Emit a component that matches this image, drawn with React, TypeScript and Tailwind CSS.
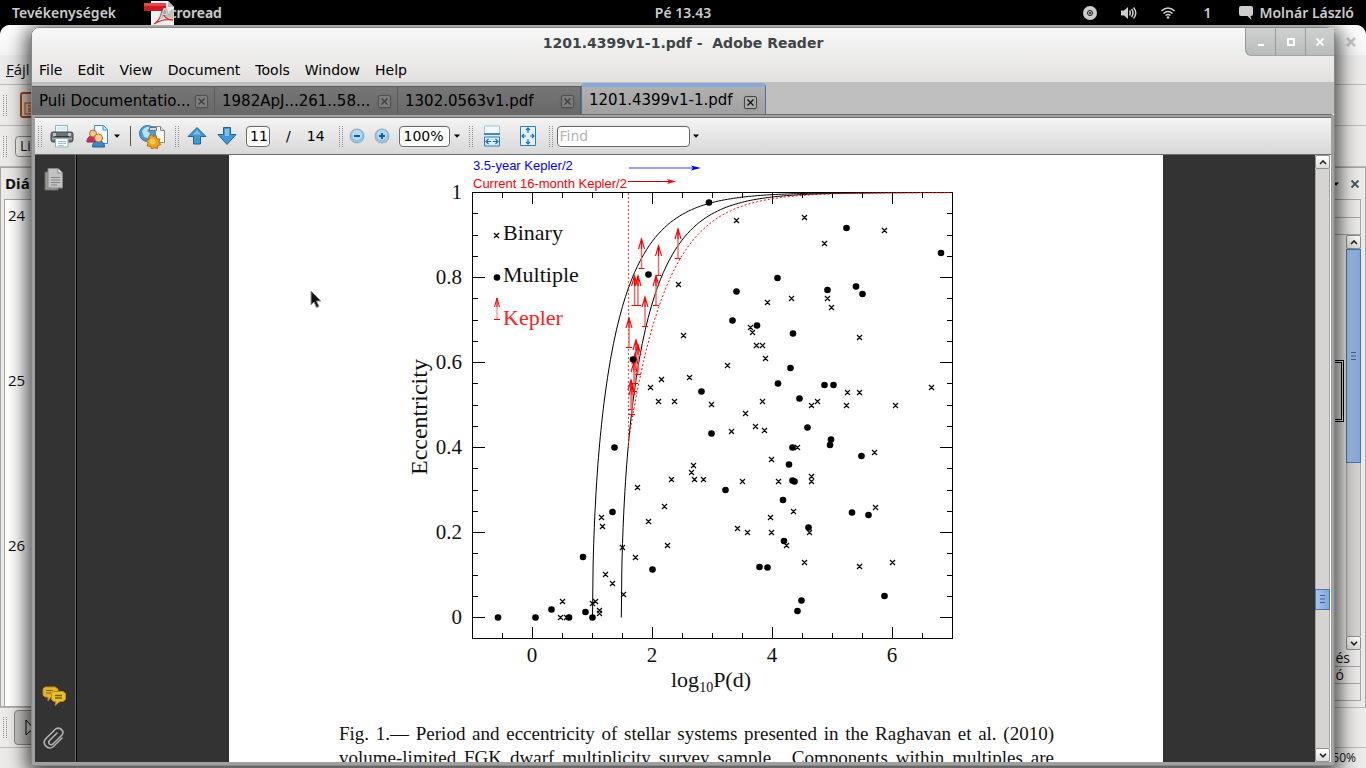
import type { ReactNode } from 'react';

type Point = [number, number];

const MENUS = ['File', 'Edit', 'View', 'Document', 'Tools', 'Window', 'Help'];

const TABS = [
  { label: 'Puli Documentatio...', active: false },
  { label: '1982ApJ...261..58...', active: false },
  { label: '1302.0563v1.pdf', active: false },
  { label: '1201.4399v1-1.pdf', active: true },
];

const SLIDES = ['24', '25', '26'];

// Data points of the plot, in page coordinates
const BINARIES: Point[] = [
  [678, 284], [683, 335], [661, 379], [689, 377], [650, 387], [658, 401], [674, 401], [711, 404],
  [693, 465], [691, 472], [694, 479], [703, 479], [671, 479], [637, 487], [664, 506], [601, 517],
  [602, 526], [648, 521], [667, 545], [622, 547], [635, 557], [605, 574], [612, 583], [623, 594],
  [562, 601], [595, 601], [592, 603], [599, 610], [599, 613], [560, 617], [566, 617], [736, 220],
  [804, 217], [884, 230], [824, 243], [791, 298], [767, 302], [827, 298], [831, 307], [859, 337],
  [750, 327], [752, 332], [756, 345], [762, 345], [765, 358], [727, 365], [762, 401], [745, 413],
  [811, 405], [817, 401], [847, 392], [859, 392], [846, 405], [895, 405], [931, 387], [731, 431],
  [755, 426], [764, 430], [771, 459], [797, 447], [874, 452], [742, 481], [778, 481], [811, 476],
  [811, 481], [793, 511], [875, 507], [770, 517], [737, 528], [747, 532], [771, 532], [809, 532],
  [786, 545], [804, 562], [859, 566], [892, 562],
];

const MULTIPLES: Point[] = [
  [709, 202.5], [648.5, 274.5], [633, 359.5], [701.5, 391.5], [711.5, 433.5], [614.5, 447.5],
  [612.5, 512], [583, 557], [652.5, 569.5], [551.5, 609.5], [585.5, 612], [498, 617.5],
  [535.5, 617.5], [569, 617.5], [592.5, 617.5], [846.5, 228], [941, 253], [777.5, 278],
  [736.5, 291.5], [827.5, 290], [856, 286.5], [862.5, 294], [732.5, 320.5], [757, 325.5],
  [793, 333.5], [790.5, 368], [778, 383.5], [824.5, 385], [833.5, 385], [799.5, 398.5],
  [807.5, 427.5], [831, 439.5], [830, 445], [792.5, 447.5], [861.5, 456], [789, 464.5],
  [792.5, 480.5], [794.5, 481.5], [725.5, 490], [783, 500], [852, 512.5], [868.5, 515],
  [808.5, 527.5], [784, 541], [759.5, 567], [767.5, 567.5], [884.5, 596], [801.5, 600.5],
  [797.5, 611],
];

// Tips of the Kepler arrows
const KEPLER: Point[] = [
  [641.5, 239], [658.5, 246], [678, 229], [634.5, 276], [638, 276], [656, 276], [645, 297],
  [629, 318], [636, 340], [638, 345], [634, 362], [635, 354], [631, 380], [632, 385],
];

const toX = (logP: number) => 532.5 + logP * 60;
const toY = (e: number) => 617.5 - e * 425;

function curve(from: number, ecc: (logP: number) => number) {
  let d = '';
  for (let p = from; p <= 7.001; p += p < from + 0.2 ? 0.01 : 0.05) {
    d += `${d ? 'L' : 'M'}${toX(p).toFixed(1)} ${toY(ecc(p)).toFixed(1)}`;
  }
  return d;
}

const circular = (p0: number) => (p: number) => Math.sqrt(Math.max(0, 1 - 10 ** ((-2 * (p - p0)) / 3)));

function KeplerArrow({ x, y }: { x: number; y: number }) {
  return (
    <>
      <path d={`M${x} ${y}v29.5`} stroke="#ff6060" strokeWidth="1.4" />
      <path d={`M${x - 3} ${y + 29.5}h6M${x - 3} ${y + 10}L${x} ${y}L${x + 3} ${y + 10}M${x} ${y}v10`} stroke="#ff0000" strokeWidth="1.1" />
    </>
  );
}

function Ticks() {
  const marks: string[] = [];
  for (let i = -1; i <= 14; i++) {
    const x = toX(i / 2);
    const len = i % 4 === 0 ? 12 : 6;
    if (i < 14) marks.push(`M${x} 192v${len}M${x} 639v-${len}`);
  }
  for (let i = 0; i < 20; i++) {
    const y = Math.round(toY(i / 20) - 0.5) + 0.5;
    const len = i % 4 === 0 ? 13 : 6;
    marks.push(`M472 ${y}h${len}M953 ${y}h-${len}`);
  }
  return <path d={marks.join('')} stroke="#000" fill="none" shapeRendering="crispEdges" />;
}

function Plot() {
  return (
    <svg viewBox="229 155 934 567" className="block h-[567px] w-[934px]" fill="none" role="img" aria-label="Eccentricity against period">
      <g fontFamily="'Liberation Sans', sans-serif" fontSize="13">
        <text x="473" y="170" fill="#0000ff">3.5-year Kepler/2</text>
        <text x="473" y="188" fill="#ff0000">Current 16-month Kepler/2</text>
      </g>
      <path d="M629 168h64" stroke="#7d7dff" strokeWidth="1.6" />
      <path d="M691 165.500l10 2.500-10 2.500 2-2.500z" fill="#0000ff" />
      <path d="M628 181.500h42" stroke="#c00000" />
      <path d="M667 179l9 2.500-9 2.500 2-2.500z" fill="#ff0000" />

      <path d="M472.500 192.500h480v446h-480z" stroke="#000" shapeRendering="crispEdges" />
      <Ticks />
      <path d={curve(1, circular(1))} stroke="#000" />
      <path d={curve(1.48, circular(1.48))} stroke="#000" />
      <path d="M628.500 193v254" stroke="#ff4040" strokeDasharray="2 2" />
      <path d={curve(1.6, (p) => 1 - 10 ** ((-2 * (p - 1.25)) / 3))} stroke="#ff0000" strokeDasharray="2 2" />

      {KEPLER.map(([x, y]) => (
        <KeplerArrow key={`${x}-${y}`} x={x} y={y} />
      ))}
      <path
        d={[...BINARIES, [496, 235] as Point].map(([x, y]) => `M${x - 2} ${y - 2}l5 5m0-5l-5 5`).join('')}
        stroke="#000"
        strokeWidth="1.2"
      />
      {[...MULTIPLES, [497, 277.5] as Point].map(([x, y]) => (
        <circle key={`${x}-${y}`} cx={x} cy={y} r="3.300" fill="#000" />
      ))}
      <path d="M497 300v19.500" stroke="#ff7070" />
      <path d="M494 319.500h6M494.500 307l2.500-9 2.500 9M497 298v9" stroke="#ff0000" />

      <g fontFamily="'Liberation Serif', serif" fontSize="22" fill="#111">
        <text x="503" y="240">Binary</text>
        <text x="503" y="282">Multiple</text>
        <text x="503" y="325" fill="#ff2020">Kepler</text>
        <text x="671" y="687">log<tspan fontSize="14" dy="5">10</tspan><tspan dy="-5">P(d)</tspan></text>
        <text transform="translate(427 475) rotate(-90)" fontSize="24">Eccentricity</text>
        <g textAnchor="end" fontSize="21">
          <text x="462" y="199">1</text>
          <text x="462" y="284">0.8</text>
          <text x="462" y="369">0.6</text>
          <text x="462" y="454">0.4</text>
          <text x="462" y="539">0.2</text>
          <text x="462" y="624">0</text>
        </g>
        <g textAnchor="middle" fontSize="21">
          <text x="532" y="662">0</text>
          <text x="652" y="662">2</text>
          <text x="772" y="662">4</text>
          <text x="892" y="662">6</text>
        </g>
      </g>
    </svg>
  );
}

function Caret() {
  return (
    <svg viewBox="0 0 6 4" className="h-1 w-1.5 shrink-0" fill="#000">
      <path d="M0 .5h6L3 3.800z" />
    </svg>
  );
}

function Grip({ className = '' }: { className?: string }) {
  return (
    <svg viewBox="0 0 4 21" className={`h-[21px] w-1 shrink-0 ${className}`} stroke="#8d8d8d" strokeDasharray="1 1">
      <path d="M.5 0v21M3.500 0v21" />
    </svg>
  );
}

function PrinterIcon() {
  return (
    <svg viewBox="0 0 24 24" className="size-6">
      <path d="M5.500 1.500h12v8h-12z" fill="#f5fbfd" stroke="#86b6c8" />
      <path d="M7 3h9v3H7z" fill="#d5eef6" />
      <rect x="1" y="8" width="22" height="10" rx="2" fill="#6d7375" stroke="#45494b" />
      <path d="M3 9h3v3H3zM18 9h3v3h-3z" fill="#bfc4c5" />
      <path d="M2 14h20v1.500H2z" fill="#a8adae" />
      <path d="M5 12.500h14" stroke="#35393b" />
      <path d="M5.500 14.500h12.500v8.500H5.500z" fill="#fff" stroke="#86b6c8" />
      <path d="M8 17.500h8M8 19.500h8M8 21.500h6" stroke="#9fc3d0" />
    </svg>
  );
}

function ShareIcon() {
  return (
    <svg viewBox="0 0 24 24" className="size-6">
      <path d="M8.500 1.500h9l4 4v14h-13z" fill="#f2f9ff" stroke="#3f8fd0" />
      <path d="M17 1.500v4.500h4.500" fill="#cfe6f8" stroke="#3f8fd0" />
      <path d="M1 18c0-4 2-6 5-6s5 2 5 6z" fill="#c3305f" stroke="#93214a" />
      <circle cx="7" cy="9.500" r="3.500" fill="#f7c58d" stroke="#b96a25" />
      <path d="M6.500 23c0-4 2-6 6-6s6 2 6 6z" fill="#3f86c4" stroke="#245f96" />
      <circle cx="12.500" cy="14" r="4" fill="#fbcf98" stroke="#b96a25" />
    </svg>
  );
}

function CollaborateIcon() {
  return (
    <svg viewBox="0 0 27 25" className="h-[25px] w-[27px]">
      <path d="M12.500 2.500h9l4 4v12h-13z" fill="#f7f7f7" stroke="#8a8a8a" />
      <path d="M21.500 2.500v4h4" fill="#ddd" stroke="#8a8a8a" />
      <circle cx="8.500" cy="9.500" r="8" fill="#4d9bd3" stroke="#2f76b0" />
      <path d="M3 7c2-4 6-5 8-4l-3 4 3 2-2 5-4-1z" fill="#b9e0f3" />
      <path d="M10.500 3.500h7v3h-7z" fill="#d8d8d8" stroke="#6f6f6f" />
      <path
        d="M13 10.500l1.800 2.200 3-1.200.4 3.300 3.300.4-1.200 3 2 2.300-3 1.200-.3 2.800-3-.8-2.700 1.300-1.300-2.700-3.300-.3 1-3-2-2.300 2.800-1.500.3-3.200z"
        transform="translate(-.5 0)"
        fill="#f2a11b"
        stroke="#b86c08"
      />
      <circle cx="13.500" cy="17.500" r="3" fill="#ffc94f" />
    </svg>
  );
}

function ArrowIcon({ down = false }: { down?: boolean }) {
  return (
    <svg viewBox="0 0 20 20" className="size-5">
      <path
        d={down ? 'M6.500 1.500h7v7h5.500L10 18.500 1 8.500h5.500z' : 'M10 1.500l9 9h-5.500v7.500h-7v-7.500H1z'}
        fill="#4298d4"
        stroke="#1f629f"
      />
      <path d={down ? 'M8 3h4v7H8z' : 'M10 4l4 4.500H6z'} fill="#7dc1ea" />
    </svg>
  );
}

function ZoomIcon({ plus = false }: { plus?: boolean }) {
  return (
    <svg viewBox="0 0 16 16" className="size-4">
      <circle cx="8" cy="8" r="7" fill="#8fc4e8" stroke="#9aa9b5" />
      <circle cx="8" cy="7" r="5" fill="#b5dcf3" />
      <path d={plus ? 'M5 8h6M8 5v6' : 'M5 8h6'} stroke="#0f5b9c" strokeWidth="2" />
    </svg>
  );
}

function FitWidthIcon() {
  return (
    <svg viewBox="0 0 18 22" className="h-[22px] w-[18px]" fill="none">
      <path d="M1.500 1h15v8h-15z" fill="#f4faff" stroke="#9cc6e4" />
      <path d="M1 9h16" stroke="#1e6fae" strokeWidth="1.500" />
      <path d="M1.500 12h15v9h-15z" fill="#d9edfa" stroke="#2e7dba" />
      <path d="M3 16.500h5m2 0h5M5.500 14L3 16.500 5.500 19M12.500 14l2.500 2.500-2.500 2.500" stroke="#1e6fae" strokeWidth="1.200" />
    </svg>
  );
}

function FitPageIcon() {
  return (
    <svg viewBox="0 0 18 22" className="h-[22px] w-[18px]" fill="none">
      <path d="M1.500 1.500h15v19h-15z" fill="#e3f2fc" stroke="#2e7dba" />
      <path
        d="M9 3v5M9 14v5M3 11h4M11 11h4M7 5l2-2 2 2M7 17l2 2 2-2M5 9l-2 2 2 2M13 9l2 2-2 2"
        stroke="#1e6fae"
        strokeWidth="1.200"
      />
    </svg>
  );
}

function ScrollButton({ down = false }: { down?: boolean }) {
  return (
    <button
      aria-label={down ? 'Scroll down' : 'Scroll up'}
      className="flex h-[14px] w-[15px] shrink-0 items-center justify-center rounded-xs border border-[#8f8f8f] bg-linear-to-b from-white to-[#dcdcda]"
    >
      <svg viewBox="0 0 8 5" className="h-[5px] w-2" fill="none" stroke="#222" strokeWidth="1.600">
        <path d={down ? 'M1 .8l3 3 3-3' : 'M1 4l3-3 3 3'} />
      </svg>
    </button>
  );
}

function ScrollThumb({ className }: { className: string }) {
  return (
    <div className={`flex w-[15px] shrink-0 items-center justify-center border border-[#4a76ab] bg-linear-to-r from-[#a8c6ec] to-[#7fa5d8] ${className}`}>
      <svg viewBox="0 0 5 8" className="h-2 w-[5px]" stroke="#3d618f">
        <path d="M0 .5h5M0 4h5M0 7.500h5" />
      </svg>
    </div>
  );
}

function TopBar() {
  return (
    <header className="grid h-[25px] shrink-0 grid-cols-3 items-center bg-black px-3 font-['Noto_Sans',sans-serif] text-[14px] leading-none font-semibold text-[#cccccc]">
      <div className="flex items-center">
        <button>Tevékenységek</button>
        <button className="ml-7 flex items-center">
          <svg viewBox="0 0 30 24" className="h-6 w-[30px]">
            <path d="M7 0h17l6 6v18H7z" fill="#f1f1f1" />
            <path d="M24 0v6h6z" fill="#bbb" />
            <path d="M0 2h22v8H0z" fill="#cf1c22" />
            <path d="M0 2h22v3H0z" fill="#e5484c" />
            <path d="M10 23c5-3 8-9 8-14 1 6 5 10 11 10-6-1-13 0-19 4z" fill="none" stroke="#e2352f" strokeWidth="1.300" />
          </svg>
          <span className="-ml-3.5 [text-shadow:0_0_2px_#444]">Acroread</span>
        </button>
      </div>
      <div className="text-center">Pé 13.43</div>
      <div className="flex items-center justify-end">
        <svg viewBox="0 0 14 14" className="size-3.5">
          <circle cx="7" cy="7" r="7" fill="#ccc" />
          <circle cx="7" cy="7" r="2.500" fill="none" stroke="#111" />
          <circle cx="7" cy="7" r="1" fill="#111" />
        </svg>
        <svg viewBox="0 0 16 14" className="ml-6 h-3.5 w-4" fill="none" stroke="#ccc" strokeWidth="1.500">
          <path d="M0 4.500h3L7 1v12L3 9.500H0z" fill="#ccc" stroke="none" />
          <path d="M8.500 4.500q1.500 2.500 0 5M10.500 3q3 4 0 8M12.500 1.500q4.500 5.500 0 11" />
        </svg>
        <svg viewBox="0 0 14 12" className="ml-6 h-3 w-3.5" fill="none" stroke="#ccc" strokeWidth="1.600">
          <path d="M.5 4q6.500-6 13 0M2.500 6.500q4.500-4 9 0M4.500 8.500q2.500-2 5 0" />
          <circle cx="7" cy="10.500" r="1.300" fill="#ccc" stroke="none" />
        </svg>
        <span className="ml-7">1</span>
        <button className="ml-7 flex items-center gap-1.5">
          <svg viewBox="0 0 14 14" className="size-3.5 shrink-0" fill="#ccc">
            <path d="M2 0h10q2 0 2 2v6q0 2-2 2h-.5l1 4-4-4H2Q0 10 0 8V2q0-2 2-2z" />
          </svg>
          <span className="whitespace-nowrap">Molnár László</span>
        </button>
      </div>
    </header>
  );
}

// The presentation editor that lies behind the reader
function BackWindow() {
  return (
    <div className="flex h-full flex-col rounded-t-[10px] bg-[#ecebea] font-['Open_Sans',sans-serif] text-[14px] leading-none text-[#111]">
      <div className="flex h-[30px] shrink-0 items-center justify-end rounded-t-[10px] bg-linear-to-b from-white to-[#f4f4f4] pr-2.5">
        <svg viewBox="0 0 10 10" className="mt-1 size-2.5" stroke="#c6c6c6" strokeWidth="2.500">
          <path d="M1 1l8 8M9 1L1 9" />
        </svg>
      </div>
      <div className="flex h-[30px] shrink-0 items-center border-b border-[#bdbbb9] pl-1.5">
        <button className="text-[15px]">
          <span className="underline">F</span>ájl
        </button>
      </div>
      <div className="flex h-[41px] shrink-0 items-center border-b border-[#bdbbb9] pl-[3px]">
        <Grip />
        <svg viewBox="0 0 26 26" className="ml-[13px] size-[26px]" fill="none" stroke="#a04a1d">
          <rect x="1" y="1" width="24" height="24" rx="2" fill="#e9d3c6" strokeWidth="2" />
          <rect x="5" y="11" width="14" height="11" fill="#f5c9ac" />
          <path d="M8 14h8M8 17h8M8 19h8" />
        </svg>
      </div>
      <div className="flex h-[41px] shrink-0 items-center border-b border-[#bdbbb9] pl-[3px]">
        <Grip />
        <div className="ml-2 flex h-[21px] w-20 items-center rounded-sm border border-[#888] bg-[#f3f3f2] pl-1">Li</div>
      </div>

      <div className="flex min-h-0 flex-1 justify-between">
        <section className="flex w-40 flex-col border border-[#a9a7a5]">
          <h2 className="flex h-[31px] shrink-0 items-center pl-1 text-[15px] font-bold">Diá</h2>
          <ol className="ml-[3px] min-h-0 flex-1 overflow-hidden border-t border-l border-[#a9a7a5] bg-white">
            {SLIDES.map((n) => (
              <li key={n} className="h-[165px] pt-2 pl-[3px] text-[15px]">{n}</li>
            ))}
          </ol>
        </section>

        <section className="flex w-[60px] flex-col border-t border-r border-[#a9a7a5] pr-1">
          <div className="flex h-[31px] shrink-0 items-center justify-end gap-3 pr-0.5">
            <Caret />
            <svg viewBox="0 0 8 8" className="size-2" stroke="#4c5a66" strokeWidth="2">
              <path d="M.5.5l7 7M7.500.5l-7 7" />
            </svg>
          </div>
          <div className="h-[18px] shrink-0 border-t border-r border-[#a9a7a5]" />
          <div className="h-[17px] shrink-0 border-t border-r border-[#a9a7a5]" />
          <div className="flex min-h-0 flex-1 justify-end border-t border-[#a9a7a5]">
            <div className="mt-[125px] mr-0.5 h-[62px] w-8 border-[3px] border-double border-black" />
            <div className="flex w-[15px] flex-col bg-[#d5d4d2]">
              <ScrollButton />
              <ScrollThumb className="h-[214px]" />
              <div className="flex-1 border-x border-[#a9a7a5]" />
              <ScrollButton down />
            </div>
          </div>
          <div className="h-[17px] shrink-0 border-r border-b border-[#a9a7a5] pr-2.5 text-right leading-4">és</div>
          <div className="h-[17px] shrink-0 border-r border-b border-[#a9a7a5] pr-4 text-right leading-4">ió</div>
          <div className="mb-1.5 h-[17px] shrink-0 border-r border-b border-[#a9a7a5]" />
        </section>
      </div>

      <div className="flex h-[41px] shrink-0 items-center border-y border-[#bdbbb9] pl-[3px]">
        <Grip />
        <button aria-label="Select" className="ml-[7px] flex size-[35px] items-center rounded-sm border border-[#888] bg-[#c9c8c6] pl-2.5">
          <svg viewBox="0 0 12 18" className="h-[18px] w-3" fill="#ddd" stroke="#000">
            <path d="M1 1v15l4-4h6z" />
          </svg>
        </button>
      </div>
      <div className="flex h-5 shrink-0 items-center justify-end pr-2.5 text-[12px]">50%</div>
    </div>
  );
}

function WindowButton({ label, children }: { label: string; children: ReactNode }) {
  return (
    <button
      aria-label={label}
      className="flex w-[30px] items-center justify-center border-l border-[#989a99] first:rounded-bl-md last:w-[29px]"
    >
      <svg viewBox="0 0 8 8" className="size-2" fill="none" stroke="#fff" strokeWidth="2">
        {children}
      </svg>
    </button>
  );
}

function TitleBar() {
  return (
    <div className="grid h-7 shrink-0 grid-cols-[1fr_auto_1fr]">
      <div />
      <h1 className="self-center pt-0.5 text-[14px] leading-none font-bold whitespace-pre text-[#3f4547]">
        1201.4399v1-1.pdf -  Adobe Reader
      </h1>
      <div className="flex justify-self-end rounded-bl-md border-b border-[#a5a7a6] bg-linear-to-b from-[#cfd1d0] to-[#b9bcbb]">
        <WindowButton label="Minimize">
          <path d="M1 7h6" />
        </WindowButton>
        <WindowButton label="Maximize">
          <path d="M1 1h6v6H1z" />
        </WindowButton>
        <WindowButton label="Close">
          <path d="M.5.5l7 7M7.500.5l-7 7" />
        </WindowButton>
      </div>
    </div>
  );
}

function TabStrip() {
  return (
    <div className="flex h-8 shrink-0 items-end bg-[#bfbfbf]">
      {TABS.map((tab) => (
        <div
          key={tab.label}
          className={[
            'flex items-center justify-between pl-[7px] text-[15px] leading-none text-black',
            tab.active
              ? 'h-[31px] w-[185px] rounded-t-sm border-x border-t-4 border-[#4f6f9f] border-t-[#8aa9d8] bg-linear-to-b from-[#b0b0b0] to-[#a0a0a0] pr-2'
              : 'h-7 w-[183px] border-t border-r border-[#5c5c5c] bg-linear-to-b from-[#767676] to-[#686868] pt-0.5 pr-1.5',
          ].join(' ')}
        >
          <span className="whitespace-nowrap">{tab.label}</span>
          <button
            aria-label={`Close ${tab.label}`}
            className={[
              'flex size-[13px] shrink-0 items-center justify-center rounded-xs border shadow-sm',
              tab.active ? 'mt-1 border-[#444] bg-[#aaa]' : 'border-[#505050] bg-[#7c7c7c]',
            ].join(' ')}
          >
            <svg viewBox="0 0 7 7" className="size-[7px]" stroke={tab.active ? '#111' : '#3c3c3c'} strokeWidth="1.300">
              <path d="M.5.5l6 6M6.500.5l-6 6" />
            </svg>
          </button>
        </div>
      ))}
    </div>
  );
}

function Toolbar() {
  const field = 'h-[21px] rounded-sm border border-[#6a6a6a] bg-white leading-none text-black shadow-[0_0_0_1px_#e6e6e6]';
  return (
    <div className="flex h-[37px] shrink-0 items-center border-b border-[#6d6d6d] bg-linear-to-b from-[#f4f4f4] to-[#d8d8d8] pl-[3px] text-[14px] leading-none text-black">
      <Grip />
      <button aria-label="Print" className="ml-2"><PrinterIcon /></button>
      <button aria-label="Share" className="ml-3 flex items-center gap-1"><ShareIcon /><Caret /></button>
      <div className="ml-[10px] h-5 w-px bg-[#555]" />
      <button aria-label="Collaborate" className="ml-2"><CollaborateIcon /></button>
      <Grip className="ml-[9px]" />
      <button aria-label="Previous page" className="ml-2"><ArrowIcon /></button>
      <button aria-label="Next page" className="ml-[10px]"><ArrowIcon down /></button>
      <input aria-label="Page" defaultValue="11" className={`ml-[9px] w-6 pl-[3px] ${field}`} />
      <span className="ml-4">/</span>
      <span className="ml-4">14</span>
      <Grip className="ml-3.5" />
      <button aria-label="Zoom out" className="ml-[6px]"><ZoomIcon /></button>
      <button aria-label="Zoom in" className="ml-[9px]"><ZoomIcon plus /></button>
      <input aria-label="Zoom" defaultValue="100%" className={`mr-1 ml-[9px] w-[51px] pl-1 ${field}`} />
      <Caret />
      <Grip className="ml-[9px]" />
      <button aria-label="Fit width" className="ml-[10px]"><FitWidthIcon /></button>
      <button aria-label="Fit page" className="ml-[18px]"><FitPageIcon /></button>
      <Grip className="ml-3" />
      <input aria-label="Find" placeholder="Find" className={`mr-[3px] ml-1 w-[133px] pl-0.5 placeholder:text-[#b5b5b5] ${field}`} />
      <Caret />
    </div>
  );
}

function NavigationPane() {
  return (
    <nav className="flex w-[42px] shrink-0 flex-col items-center border-r border-black bg-[#333] pt-3 pb-3 shadow-[inset_-1px_0_0_#6a6a6a]">
      <button aria-label="Pages" className="pr-1">
        <svg viewBox="0 0 20 24" className="h-6 w-5">
          <path d="M1 5h13v18H1z" fill="#9a9a9a" stroke="#6d6d6d" />
          <path d="M4 1.500h10l4.500 4.500v15H4z" fill="#c2c2c2" stroke="#858585" />
          <path d="M14 1.500V6h4.500" fill="#eee" stroke="#858585" />
          <path d="M7 10.500h9M7 13h9M7 15.500h9M7 18h6" stroke="#888" />
        </svg>
      </button>
      <button aria-label="Comments" className="mt-auto pr-1">
        <svg viewBox="0 0 24 20" className="h-5 w-6" strokeWidth="1">
          <path d="M3 1h10l3 2v6l-3 2H9l-3 4v-4H3L1 9V3z" fill="#dfb92c" stroke="#c8811b" />
          <path d="M4 4.500h7M4 7h5" stroke="#7d6110" />
          <path d="M12 5.500h9l2.500 2v6L21 15.500h-3l-5 4 1-4h-2l-2.500-2v-6z" fill="#e8c52f" stroke="#c8811b" />
          <path d="M13 9.500h7M13 12h7" stroke="#7d6110" strokeWidth="1.300" />
        </svg>
      </button>
      <button aria-label="Attachments" className="mt-5 pr-1">
        <svg viewBox="0 0 24 24" className="size-6" fill="none" stroke="#b0b0b0" strokeWidth="1.600" strokeLinecap="round">
          <path d="M20 12l-8.500 8.500c-5 4-12-2-8-7.500L13 3.500c4-3.500 10 1 7 5.500l-9 9c-3 2-5.500-1-3.500-3.500L15 7" />
        </svg>
      </button>
    </nav>
  );
}

function ReaderWindow() {
  return (
    <main className="flex h-full flex-col rounded-t-lg border border-[#878787] bg-linear-to-b from-[#f8f8f8] to-[#e2e1df] font-['DejaVu_Sans',sans-serif] shadow-[0_4px_20px_4px_rgba(0,0,0,0.75)]">
      <div className="shrink-0 rounded-t-lg bg-linear-to-b from-[#f8f8f8] to-[#e2e1df]">
        <TitleBar />
        <div className="flex h-[26px] items-center gap-[15px] pt-0.5 pl-[7px] text-[14px] leading-none text-black">
          {MENUS.map((menu) => (
            <button key={menu}>{menu}</button>
          ))}
        </div>
      </div>
      <TabStrip />
      <div className="flex min-h-0 flex-1 flex-col rounded-tr-sm border-t border-[#6d6d6d] bg-[#a0a0a0] px-[3px] pt-0.5 pb-[3px]">
        <div className="flex min-h-0 flex-1 flex-col border-t border-[#6d6d6d]">
          <Toolbar />
          <div className="flex min-h-0 flex-1">
            <NavigationPane />
            <div className="min-w-0 flex-1 overflow-hidden bg-[#333]">
              <article className="mx-auto h-full w-[934px] overflow-hidden bg-white">
                <Plot />
                <div className="ml-[110px] w-[715px] font-['Liberation_Serif',serif] text-[19px] leading-6 whitespace-nowrap text-[#111]">
                  <p className="[text-align-last:justify]">
                    Fig. 1.— Period and eccentricity of stellar systems presented in the Raghavan et al. (2010)
                  </p>
                  <p className="[text-align-last:justify]">
                    volume-limited FGK dwarf multiplicity survey sample. &nbsp;Components within multiples are
                  </p>
                </div>
              </article>
            </div>
            <div className="flex w-4 shrink-0 flex-col border-r border-white bg-[#d5d4d2]">
              <ScrollButton />
              <div className="w-[15px] grow-[419] border-x border-[#a9a7a5]" />
              <ScrollThumb className="h-[21px]" />
              <div className="w-[15px] grow-[138] border-x border-[#a9a7a5]" />
              <ScrollButton down />
            </div>
          </div>
        </div>
      </div>
    </main>
  );
}

export default function App() {
  return (
    <div className="relative flex h-screen w-full flex-col overflow-hidden bg-black">
      <TopBar />
      <div className="relative min-h-0 flex-1 overflow-hidden">
        <BackWindow />
        <div className="absolute inset-x-[31px] top-0.5 bottom-0.5">
          <ReaderWindow />
        </div>
      </div>
      {/* Mouse pointer */}
      <svg viewBox="0 0 12 19" className="absolute top-[290px] left-[310px] h-[19px] w-3" fill="#111" stroke="#999">
        <path d="M1 1v14l3-3 2.500 5.500 2.500-1L6.500 11h4.500z" />
      </svg>
    </div>
  );
}
